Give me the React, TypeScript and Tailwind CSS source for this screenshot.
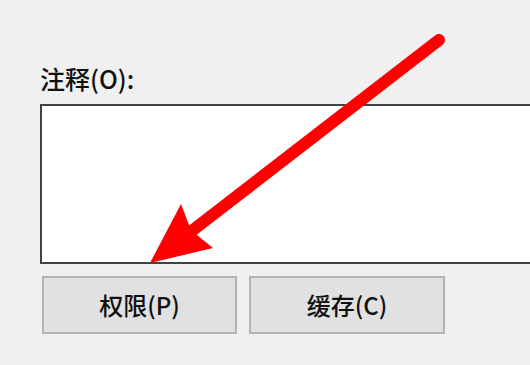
import React from "react";

export default function App() {
  return (
    <div
      className="relative w-[530px] h-[365px] overflow-hidden bg-[#f0f0f0] text-[#111111]"
      style={{ fontFamily: '"Noto Sans CJK SC", "Noto Sans", sans-serif' }}
    >
      <div className="flex flex-col pl-[40px] pt-[62px]">
        <div className="text-[25px] leading-[32px] font-medium">注释(O):</div>
        <div className="mt-[10px] w-[520px] h-[160px] border-2 border-[#414141] bg-white" />
        <div className="mt-[12px] ml-[2px] flex gap-[12px]">
          <button className="w-[195px] h-[58px] border-2 border-[#b3b3b3] bg-[#e1e1e1] text-[24px] font-medium leading-none flex items-center justify-center">
            权限(P)
          </button>
          <button className="w-[196px] h-[58px] border-2 border-[#b3b3b3] bg-[#e1e1e1] text-[24px] font-medium leading-none flex items-center justify-center">
            缓存(C)
          </button>
        </div>
      </div>
      <svg
        className="absolute left-0 top-0 pointer-events-none"
        width="530"
        height="365"
        viewBox="0 0 530 365"
      >
        <line x1="439" y1="40" x2="193" y2="230" stroke="#ff0000" strokeWidth="12" strokeLinecap="round" />
        <polygon points="150,263 181,204 189,225 197,235 213,248" fill="#ff0000" />
      </svg>
    </div>
  );
}
